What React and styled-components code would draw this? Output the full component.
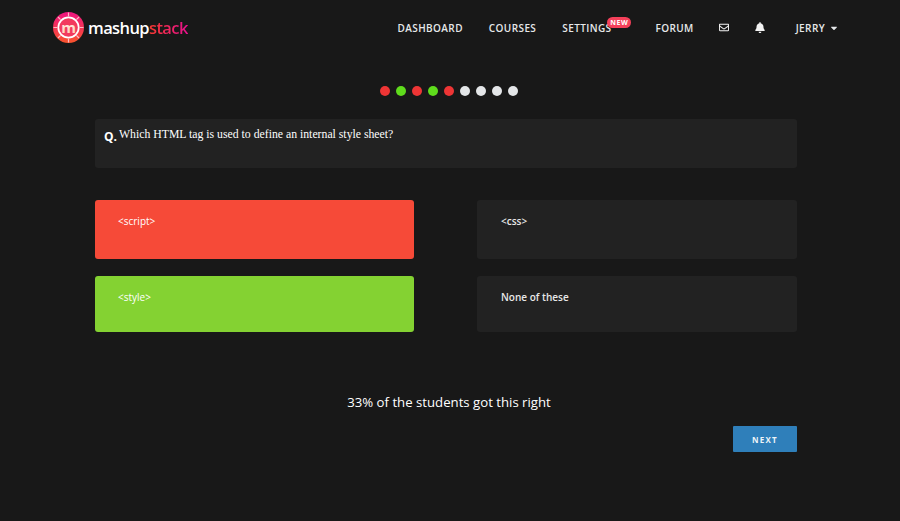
import React from "react";
import styled, { createGlobalStyle } from "styled-components";
import { FaRegEnvelope, FaBell, FaCaretDown } from "react-icons/fa";

const Global = createGlobalStyle`
  html, body { margin: 0; padding: 0; background: #181818; }
  body { font-family: "Open Sans", "Liberation Sans", sans-serif; color: #fff; }
  * { box-sizing: border-box; }
`;

const Page = styled.div`
  width: 900px;
  height: 521px;
  overflow: hidden;
  background: #181818;
`;

const Header = styled.header`
  height: 55px;
  padding: 0 61px 0 53px;
  display: flex;
  align-items: center;
  justify-content: space-between;
`;

const Brand = styled.div`
  display: flex;
  align-items: center;
  gap: 4px;
`;

const BrandName = styled.span`
  font-family: "Open Sans", sans-serif;
  font-size: 16.5px;
  font-weight: 600;
  letter-spacing: -0.6px;
  line-height: 24px;
  color: #fff;
`;

const BrandAccent = styled.span`
  background: linear-gradient(90deg, #f5392f, #e8108f);
  -webkit-background-clip: text;
  background-clip: text;
  color: transparent;
`;

const Nav = styled.nav`
  display: flex;
  align-items: center;
  gap: 26px;
`;

const NavLink = styled.a`
  position: relative;
  display: flex;
  align-items: center;
  gap: 4px;
  font-size: 10px;
  font-weight: 600;
  letter-spacing: 0.4px;
  line-height: 14px;
  color: #e6e8ea;
  margin-right: ${(p) => p.$after || 0}px;
  margin-left: ${(p) => p.$before || 0}px;
`;

const NavIcon = styled.span`
  display: flex;
  width: 10px;
  justify-content: center;
  font-size: 11px;
  color: #f2f2f2;
`;

const Badge = styled.span`
  position: absolute;
  top: -4px;
  right: -20px;
  height: 11px;
  padding: 0 3px;
  border-radius: 6px;
  background: #f5405a;
  color: #fff;
  font-size: 7px;
  font-weight: 700;
  letter-spacing: 0.6px;
  line-height: 11px;
`;

const Main = styled.main`
  width: 702px;
  margin: 0 0 0 95px;
`;

const Dots = styled.div`
  display: flex;
  justify-content: center;
  gap: 6px;
  padding-top: 31px;
  margin-left: 5px;
`;

const Dot = styled.span`
  width: 10px;
  height: 10px;
  border-radius: 50%;
  background: ${(p) => p.$color};
`;

const Question = styled.div`
  margin-top: 23px;
  height: 49px;
  padding: 7px 9px;
  display: flex;
  align-items: flex-start;
  gap: 2px;
  background: #222222;
  border-radius: 3px;
`;

const QMark = styled.span`
  font-size: 12px;
  font-weight: 700;
  line-height: 20px;
  margin-top: 1px;
`;

const QText = styled.span`
  font-family: "Liberation Serif", serif;
  font-size: 11.75px;
  line-height: 17px;
  color: #fff;
`;

const Answers = styled.div`
  margin-top: 32px;
  display: grid;
  grid-template-columns: 319px 320px;
  grid-template-rows: 59px 56px;
  column-gap: 63px;
  row-gap: 17px;
`;

const Answer = styled.div`
  padding: 14px 23px 0 ${(p) => (p.$bg ? 23 : 24)}px;
  border-radius: 3px;
  background: ${(p) => p.$bg || "#222222"};
  font-size: 10px;
  font-weight: ${(p) => (p.$bg ? 400 : 600)};
  line-height: 15px;
  color: ${(p) => (p.$bg ? "#fff" : "#e8e8e8")};
`;

const Stat = styled.p`
  margin: 60px 0 0;
  padding-left: 6px;
  text-align: center;
  font-size: 13.2px;
  line-height: 20px;
  color: #fff;
`;

const Actions = styled.div`
  margin-top: 14px;
  display: flex;
  justify-content: flex-end;
`;

const NextButton = styled.button`
  width: 64px;
  height: 26px;
  border: 0;
  border-radius: 1px;
  padding: 0;
  background: #2f7fba;
  color: #eef4f8;
  font-family: inherit;
  font-size: 8px;
  font-weight: 700;
  letter-spacing: 1.2px;
`;

const Logo = () => (
  <svg width="31" height="31" viewBox="0 0 31 31">
    <defs>
      <linearGradient id="lg" x1="0" y1="0" x2="0" y2="1">
        <stop offset="0" stopColor="#ef1481" />
        <stop offset="1" stopColor="#f9542c" />
      </linearGradient>
      <linearGradient id="lm" x1="0" y1="0" x2="0" y2="1">
        <stop offset="0" stopColor="#ffffff" />
        <stop offset="1" stopColor="#ffc9a8" />
      </linearGradient>
    </defs>
    <circle cx="15.5" cy="15.5" r="15.5" fill="url(#lg)" />
    <circle cx="15.5" cy="15.5" r="10.2" fill="#f23a5e" stroke="#fff" strokeWidth="1.7" />
    <path
      d="M15.5 0.5v4M15.5 26.5v4M0.5 15.5h4M26.5 15.5h4M5 5l2.6 2.6M26 5l-2.6 2.6M5 26l2.6-2.6M26 26l-2.6-2.6"
      stroke="#ffb8c4"
      strokeWidth="1.2"
    />
    <text
      x="15.5"
      y="20.5"
      textAnchor="middle"
      fontFamily="Open Sans, sans-serif"
      fontWeight="700"
      fontSize="15"
      fill="url(#lm)"
    >
      m
    </text>
  </svg>
);

const dots = ["#ee3535", "#5fdc1c", "#ee3535", "#5fdc1c", "#ee3535", "#e4e6e8", "#e4e6e8", "#e4e6e8", "#e4e6e8"];

export default function App() {
  return (
    <Page>
      <Global />
      <Header>
        <Brand>
          <Logo />
          <BrandName>
            mashup<BrandAccent>stack</BrandAccent>
          </BrandName>
        </Brand>
        <Nav>
          <NavLink>DASHBOARD</NavLink>
          <NavLink>COURSES</NavLink>
          <NavLink $after={18}>
            SETTINGS
            <Badge>NEW</Badge>
          </NavLink>
          <NavLink $after={-1}>FORUM</NavLink>
          <NavIcon>
            <FaRegEnvelope />
          </NavIcon>
          <NavIcon>
            <FaBell />
          </NavIcon>
          <NavLink $before={5}>
            JERRY
            <FaCaretDown size={10} />
          </NavLink>
        </Nav>
      </Header>
      <Main>
        <Dots>
          {dots.map((c, i) => (
            <Dot key={i} $color={c} />
          ))}
        </Dots>
        <Question>
          <QMark>Q.</QMark>
          <QText>Which HTML tag is used to define an internal style sheet?</QText>
        </Question>
        <Answers>
          <Answer $bg="#f64a38">&lt;script&gt;</Answer>
          <Answer>&lt;css&gt;</Answer>
          <Answer $bg="#84d232">&lt;style&gt;</Answer>
          <Answer>None of these</Answer>
        </Answers>
        <Stat>33% of the students got this right</Stat>
        <Actions>
          <NextButton>NEXT</NextButton>
        </Actions>
      </Main>
    </Page>
  );
}
